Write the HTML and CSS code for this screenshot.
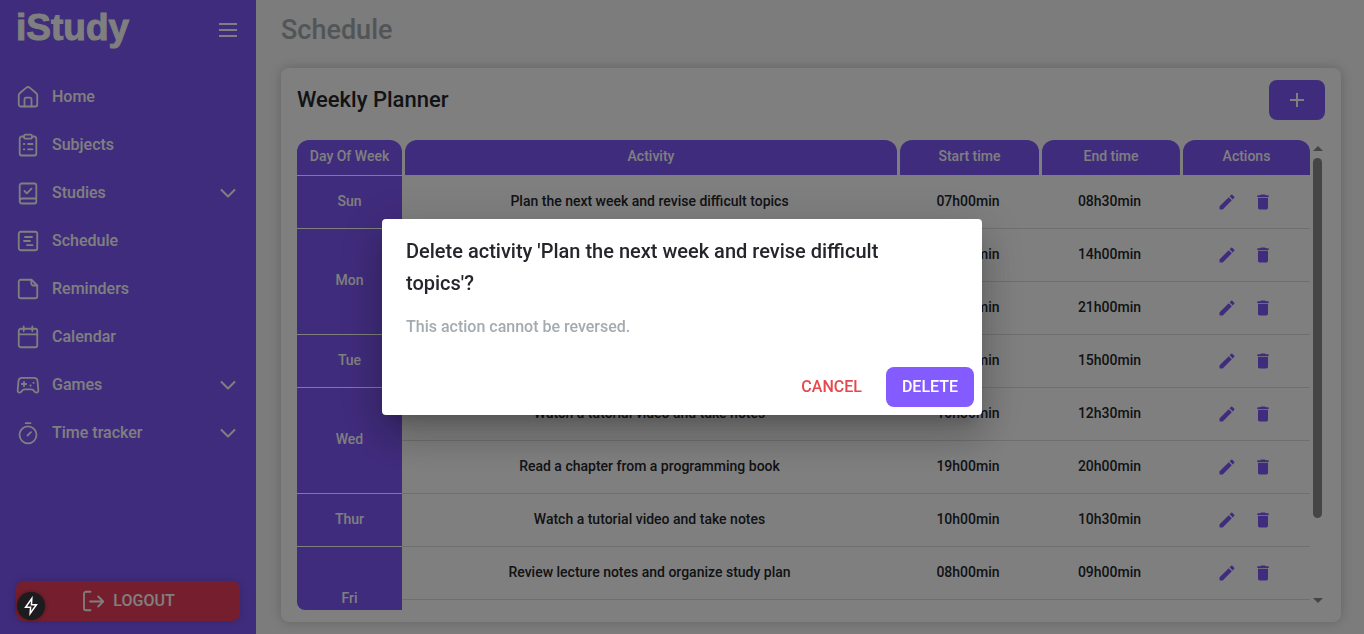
FILE: index.html
```html
<!DOCTYPE html>
<html lang="en">
<head>
<meta charset="utf-8">
<title>iStudy - Schedule</title>
<link rel="stylesheet" href="styles.css">
</head>
<body>
<svg class="sprite" width="0" height="0" aria-hidden="true">
  <symbol id="chevron" viewBox="0 0 24 24"><path d="M5.500 9l6.500 6.500L18.500 9"/></symbol>
  <symbol id="pencil" viewBox="0 0 24 24"><path d="M3 17.460v3.040c0 .28.22.5.5.5h3.040c.13 0 .26-.05.35-.15L17.810 9.940l-3.750-3.750L3.150 17.100c-.1.1-.15.22-.15.36zM20.710 7.040a1 1 0 0 0 0-1.410l-2.340-2.340a1 1 0 0 0-1.410 0l-1.830 1.830 3.750 3.750z"/></symbol>
  <symbol id="trash" viewBox="0 0 24 24"><path d="M6 19c0 1.100.9 2 2 2h8c1.100 0 2-.9 2-2V7H6zM18 4h-2.500l-.71-.71A1 1 0 0 0 14.090 3H9.910a1 1 0 0 0-.7.290L8.500 4H6a1 1 0 0 0 0 2h12a1 1 0 0 0 0-2z"/></symbol>
</svg>
<div class="app">
  <aside class="sidebar">
    <div class="brand">
      <span class="logo">iStudy</span>
      <button class="icon-btn" type="button" aria-label="Toggle menu"><svg class="icon menu" viewBox="0 0 24 24"><path d="M3 6h18M3 12h18M3 18h18"/></svg></button>
    </div>
    <nav class="nav">
      <a class="nav-item" href="#home"><svg class="icon" viewBox="0 0 24 24"><path d="M2.750 10.500a3 3 0 0 1 1-2.300l6.300-5.300a3 3 0 0 1 4 0l6.200 5.300a3 3 0 0 1 1 2.300v9a2 2 0 0 1-2 2H4.750a2 2 0 0 1-2-2z"/><path d="M8.500 21.500v-7.300a1.500 1.500 0 0 1 1.500-1.500h4a1.500 1.500 0 0 1 1.500 1.500v7.300"/></svg><span>Home</span></a>
      <a class="nav-item" href="#subjects"><svg class="icon" viewBox="0 0 24 24"><path d="M8 3.500H5.700a2 2 0 0 0-2 2v15a2 2 0 0 0 2 2h12.600a2 2 0 0 0 2-2v-15a2 2 0 0 0-2-2H16"/><rect x="8" y="1.700" width="8" height="4" rx="1.500"/><path d="M7.800 11h.6M12 11h4.500M7.800 16.300h.6M12 16.300h4.500"/></svg><span>Subjects</span></a>
      <button class="nav-item" type="button"><svg class="icon" viewBox="0 0 24 24"><path d="M3.700 19.500v-15a2 2 0 0 1 2-2h12.600a2 2 0 0 1 2 2v16a2 2 0 0 1-2 2H6.200a2.500 2.500 0 0 1 0-5h14.100M8.500 10l2.300 2.300 4.700-4.700"/></svg><span>Studies</span><svg class="icon chevron"><use href="#chevron"/></svg></button>
      <a class="nav-item" href="#schedule"><svg class="icon" viewBox="0 0 24 24"><rect x="2.750" y="2.750" width="18.500" height="18.500" rx="2"/><path d="M9 8h7M8 12h6M11 16.200h5.500"/></svg><span>Schedule</span></a>
      <a class="nav-item" href="#reminders"><svg class="icon" viewBox="0 0 24 24"><path d="M15.500 2.750H4.750a2 2 0 0 0-2 2v14.500a2 2 0 0 0 2 2h14.500a2 2 0 0 0 2-2V8.500zM15.300 2.750V6.500a2 2 0 0 0 2 2h3.900"/></svg><span>Reminders</span></a>
      <a class="nav-item" href="#calendar"><svg class="icon" viewBox="0 0 24 24"><rect x="2.750" y="3.750" width="18.500" height="18.500" rx="2"/><path d="M2.750 9.300h18.500M7.700 1.500V6M16.300 1.500V6"/></svg><span>Calendar</span></a>
      <button class="nav-item" type="button"><svg class="icon" viewBox="0 0 24 24"><path d="M6 4.800h12c2 0 3.200 1 3.500 3l.8 9.200c.1 1.800-.6 2.600-1.900 2.600-1.200 0-1.700-.6-2.300-1.600-.6-1-1.400-1.600-2.600-1.600h-7c-1.200 0-2 .6-2.600 1.600-.6 1-1.100 1.600-2.300 1.600-1.300 0-2-.8-1.900-2.600l.8-9.200c.3-2 1.500-3 3.500-3z"/><path d="M8 8.800v4.400M5.800 11h4.400M14.300 12.500h.4M17.300 9.800h.4"/></svg><span>Games</span><svg class="icon chevron"><use href="#chevron"/></svg></button>
      <button class="nav-item" type="button"><svg class="icon" viewBox="0 0 24 24"><circle cx="12" cy="13.800" r="8.500"/><path d="M11.500 14.500l3.500-3.300M9.700 2.200h4.800"/></svg><span>Time tracker</span><svg class="icon chevron"><use href="#chevron"/></svg></button>
    </nav>
    <button class="btn logout" type="button"><svg class="icon" viewBox="0 0 24 24"><path d="M9.500 2.750H5a2 2 0 0 0-2 2v14.500a2 2 0 0 0 2 2h4.500M9 12.500h13M17.200 7.500l5 5-5 5"/></svg>LOGOUT</button>
  </aside>
  <main class="main">
    <h1 class="page-title">Schedule</h1>
    <section class="card">
      <header class="card-head">
        <h2 class="card-title">Weekly Planner</h2>
        <button class="btn primary add" type="button" aria-label="Add activity"><svg class="icon plus" viewBox="0 0 24 24"><path d="M12 5v14M5 12h14"/></svg></button>
      </header>
      <div class="planner">
        <div class="viewport">
          <table class="table">
            <colgroup><col class="c-day"><col><col class="c-start"><col class="c-end"><col class="c-act"></colgroup>
            <thead><tr><th><div class="head">Day Of Week</div></th><th><div class="head">Activity</div></th><th><div class="head">Start time</div></th><th><div class="head">End time</div></th><th><div class="head">Actions</div></th></tr></thead>
            <tbody>
              <tr><th class="day" scope="row">Sun</th><td>Plan the next week and revise difficult topics</td><td>07h00min</td><td>08h30min</td><td class="acts"></td></tr>
              <tr><th class="day" scope="rowgroup" rowspan="2">Mon</th><td></td><td>13h00min</td><td>14h00min</td><td class="acts"></td></tr>
              <tr><td></td><td>20h00min</td><td>21h00min</td><td class="acts"></td></tr>
              <tr><th class="day" scope="row">Tue</th><td></td><td>14h00min</td><td>15h00min</td><td class="acts"></td></tr>
              <tr><th class="day" scope="rowgroup" rowspan="2">Wed</th><td>Watch a tutorial video and take notes</td><td>10h30min</td><td>12h30min</td><td class="acts"></td></tr>
              <tr><td>Read a chapter from a programming book</td><td>19h00min</td><td>20h00min</td><td class="acts"></td></tr>
              <tr><th class="day" scope="row">Thur</th><td>Watch a tutorial video and take notes</td><td>10h00min</td><td>10h30min</td><td class="acts"></td></tr>
              <tr><th class="day" scope="rowgroup" rowspan="2">Fri</th><td>Review lecture notes and organize study plan</td><td>08h00min</td><td>09h00min</td><td class="acts"></td></tr>
              <tr><td></td><td></td><td></td><td></td></tr>
            </tbody>
          </table>
        </div>
        <div class="scrollbar" aria-hidden="true"><span class="arrow up"></span><span class="track"><span class="thumb"></span></span><span class="arrow down"></span></div>
      </div>
    </section>
  </main>
</div>
<div class="backdrop">
  <div class="dialog" role="dialog" aria-modal="true" aria-labelledby="dlg-title">
    <h2 class="dialog-title" id="dlg-title">Delete activity 'Plan the next week and revise difficult topics'?</h2>
    <p class="dialog-text">This action cannot be reversed.</p>
    <div class="dialog-actions"><button class="btn cancel" type="button">CANCEL</button><button class="btn primary" type="button">DELETE</button></div>
  </div>
</div>
<button class="bolt" type="button" aria-label="Developer tools"><svg viewBox="0 0 24 24"><path d="M13 3L5.500 13.500H11.500L11 21l7.500-10.500H12.500z"/></svg></button>
<script src="app.js"></script>
</body>
</html>
```
FILE: app.js
```js
document.querySelectorAll('.acts').forEach(function (cell) {
  cell.innerHTML = '<div class="act-row">' +
    '<button class="act" type="button" aria-label="Edit"><svg><use href="#pencil"/></svg></button>' +
    '<button class="act" type="button" aria-label="Delete"><svg><use href="#trash"/></svg></button></div>';
});
```
FILE: styles.css
```css
* { box-sizing: border-box; }
body {
  margin: 0;
  font: 500 16px/24px Roboto, "Liberation Sans", sans-serif;
  color: #25262b;
  background: #f8f8f8;
}
h1, h2, p { margin: 0; font-weight: 500; }
button { font: inherit; color: inherit; background: none; border: 0; padding: 0; cursor: pointer; }
.sprite { position: absolute; }
.app { display: flex; height: 100vh; overflow: hidden; }

.icon { width: 24px; height: 24px; flex: none; fill: none; stroke: currentColor; stroke-width: 1.8; stroke-linecap: round; stroke-linejoin: round; }
.sidebar { width: 256px; flex: none; display: flex; flex-direction: column; padding: 0 16px 13px; background: #8058f8; color: #fff; }
.brand { display: flex; align-items: center; justify-content: space-between; height: 60px; margin-bottom: 13px; }
.logo { align-self: flex-start; font: 700 37px/56px "Liberation Sans", Arial, sans-serif; -webkit-text-stroke: 1px #fff; }
.icon-btn { display: flex; }
.menu { stroke-linecap: butt; stroke-width: 2; }
.plus { stroke-linecap: butt; stroke-width: 2; }
.nav { display: flex; flex-direction: column; flex: 1; }
.nav-item { display: flex; align-items: center; gap: 12px; height: 48px; color: #fff; text-decoration: none; text-align: left; }
.nav-item span { flex: 1; }
.chevron { stroke-width: 2; }

.btn { display: inline-flex; align-items: center; justify-content: center; gap: 8px; height: 40px; padding: 0 16px; border-radius: 8px; }
.primary { background: #845bff; color: #fff; }
.add { width: 56px; background: #8058f8; }
.logout { background: #ea3e5c; box-shadow: 0 0 8px rgba(0, 0, 0, .15); }
.cancel { color: #e5484d; }

.main { flex: 1; min-width: 0; display: flex; flex-direction: column; padding: 0 23px 12px 25px; }
.page-title { font-size: 27px; line-height: 60px; margin-bottom: 8px; color: #a4abb0; }
.card { flex: 1; min-height: 0; display: flex; flex-direction: column; gap: 20px; padding: 12px 16px; border-radius: 8px; background: #fff; box-shadow: 0 0 12px rgba(0, 0, 0, .2); }
.card-head { display: flex; align-items: center; justify-content: space-between; }
.card-title { font-size: 22px; line-height: 32px; }
.planner { flex: 1; min-height: 0; display: flex; }
.viewport { flex: 1; overflow: hidden; border-radius: 0 0 0 8px; }
.table { width: 100%; table-layout: fixed; border-collapse: separate; border-spacing: 0; font-size: 14px; line-height: 20px; text-align: center; }
.c-day { width: 105px; }
.c-start { width: 142px; }
.c-end { width: 141px; }
.c-act { width: 130px; }
.table th { padding: 0; font-weight: 500; }
.head { height: 35px; margin: 0 0 1px 3px; padding-top: 6px; border-radius: 12px 12px 0 0; background: #8058f8; color: #fff; }
th:first-child .head { margin-left: 0; }
.table td { height: 53px; padding: 0 0 2px; border-bottom: 1px solid #dedede; }
.table .acts { padding: 0; }
.table .day { padding-bottom: 3px; background: #8058f8; color: #fff; border-bottom: 1px solid #fff; }
.act-row { display: flex; justify-content: center; gap: 16px; }
.act { display: flex; color: #8058f8; }
.act svg { width: 20px; height: 20px; fill: currentColor; }

.scrollbar { width: 15px; display: flex; flex-direction: column; align-items: center; padding: 6px 0 7px; }
.arrow { border: 5px solid transparent; border-top-width: 0; border-bottom: 5px solid #8a8a8a; }
.down { border-bottom-width: 0; border-top: 5px solid #8a8a8a; }
.track { flex: 1; width: 9px; padding: 7px 0 6px; }
.thumb { display: block; height: 83%; border-radius: 5px; background: #8a8a8a; }

.backdrop { position: fixed; inset: 0; display: flex; align-items: center; justify-content: center; background: rgba(0, 0, 0, .5); }
.dialog { width: 600px; max-width: calc(100% - 64px); border-radius: 4px; background: #fff; box-shadow: 0 11px 15px -7px rgba(0, 0, 0, .2), 0 24px 38px 3px rgba(0, 0, 0, .14), 0 9px 46px 8px rgba(0, 0, 0, .12); }
.dialog-title { padding: 16px 48px 16px 24px; font-size: 20px; line-height: 32px; }
.dialog-text { padding: 0 24px 20px; color: #a4abb0; }
.dialog-actions { display: flex; justify-content: flex-end; gap: 8px; padding: 8px; }
.bolt { position: fixed; left: 17px; bottom: 14px; width: 28px; height: 28px; display: flex; align-items: center; justify-content: center; border-radius: 50%; background: #1c1c1e; box-shadow: 0 0 4px rgba(0, 0, 0, .4); }
.bolt svg { width: 20px; height: 20px; fill: none; stroke: #fff; stroke-width: 1.8; stroke-linejoin: miter; }
```
